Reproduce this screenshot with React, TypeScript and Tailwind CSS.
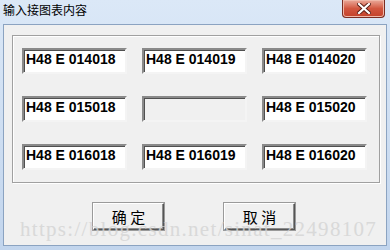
import React from 'react';

const rows: (string | null)[][] = [
  ['H48 E 014018', 'H48 E 014019', 'H48 E 014020'],
  ['H48 E 015018', null, 'H48 E 015020'],
  ['H48 E 016018', 'H48 E 016019', 'H48 E 016020'],
];

const EditBox: React.FC<{ value: string | null }> = ({ value }) => (
  <div
    className={`h-[26px] w-[105px] border-2 border-t-[#8a8a8a] border-l-[#8a8a8a] border-b-[#f4f4f4] border-r-[#f4f4f4] shadow-[inset_1px_1px_0_#505050] pl-[2px] font-['Liberation_Sans',sans-serif] text-[14px] font-bold leading-[18px] text-black ${
      value === null ? 'bg-[#f0f0f0]' : 'bg-white'
    }`}
  >
    {value}
  </div>
);

const Btn: React.FC<{ label: string }> = ({ label }) => (
  <button
    type="button"
    className="h-[27px] w-[71px] border border-t-white border-l-white border-b-[#555555] border-r-[#555555] shadow-[inset_-1px_-1px_0_#8c8c8c,0_0_0_1px_#9a9a9a] bg-[#f0f0f0] font-['Noto_Sans_CJK_SC',sans-serif] text-[15px] leading-none text-black"
  >
    {label}
  </button>
);

export default function App() {
  return (
    <div className="relative flex h-[250px] w-[390px] flex-col bg-gradient-to-b from-[#dbe8f7] to-[#c2d5ed]">
      {/* title bar */}
      <div className="flex h-[24px] items-start justify-between">
        <span className="pl-[3px] pt-[3px] font-['Noto_Sans_CJK_SC',sans-serif] text-[12px] leading-[14px] text-black">
          输入接图表内容
        </span>
        <div className="mr-[5px] flex h-[18px] w-[43px] items-center justify-center rounded-b-[4px] border border-t-0 border-[#7b2d22] bg-gradient-to-b from-[#e9a99a] via-[#d2563f] to-[#c3422a] shadow-[inset_0_0_0_1px_#f0b8a8]">
          <svg width="14" height="11" viewBox="0 0 14 11">
            <path d="M2 1 L12 10 M12 1 L2 10" stroke="#5a1d14" strokeWidth="4" strokeLinecap="square" />
            <path d="M2 1 L12 10 M12 1 L2 10" stroke="#ffffff" strokeWidth="2.2" strokeLinecap="square" />
          </svg>
        </div>
      </div>

      {/* client area */}
      <div className="mx-[3px] mb-[4px] flex flex-1 flex-col border border-[#8ba3c1] bg-[#f0f0f0] pl-[8px] pt-[10px]">
        <div className="h-[148px] w-[368px] border border-[#a0a0a0] shadow-[inset_1px_1px_0_#ffffff,1px_1px_0_#ffffff]">
          <div className="grid grid-cols-[105px_105px_105px] gap-x-[15px] gap-y-[22px] pl-[9px] pt-[12px]">
            {rows.flat().map((v, i) => (
              <EditBox key={i} value={v} />
            ))}
          </div>
        </div>
        <div className="mt-[20px] flex gap-[60px] pl-[81px]">
          <Btn label="确 定" />
          <Btn label="取 消" />
        </div>
      </div>

      {/* watermark */}
      <div className="pointer-events-none absolute left-[20px] top-[217px] whitespace-nowrap font-['Liberation_Serif',serif] text-[21px] leading-[24px] tracking-[1.3px] text-[#d4d4d4] opacity-80">
        https://blog.csdn.net/sinat_22498107
      </div>
    </div>
  );
}
